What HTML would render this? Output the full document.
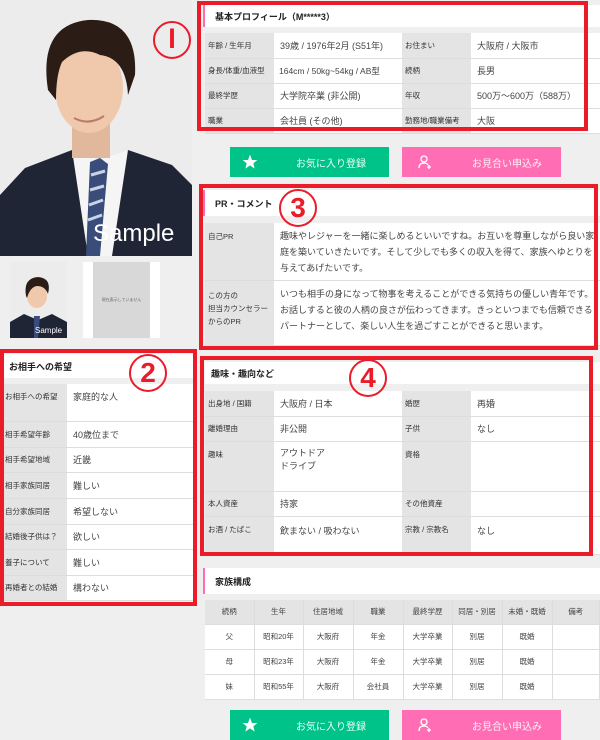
<!DOCTYPE html>
<html><head><meta charset="utf-8">
<style>
*{margin:0;padding:0;box-sizing:border-box}
body{width:600px;height:740px;background:#efefef;position:relative;overflow:hidden;font-family:"Liberation Sans","Noto Sans CJK JP",sans-serif;color:#333}
.abs{position:absolute}
.title{position:absolute;background:#fff;font-size:9px;font-weight:bold;color:#222;padding-left:10px;display:flex;align-items:center}
.title.acc{border-left:2px solid #ff6eb4}
table{position:absolute;border-collapse:collapse;table-layout:fixed}
td{border-bottom:1px solid #ddd;vertical-align:middle;font-size:9px;color:#444;padding:0 6px;background:#fff}
td.l{background:#e4e4e4;font-size:7.5px;color:#333;padding:0 3px}
.red{position:absolute;border:4px solid #ea1c2a}
.num{position:absolute;border:2px solid #ea1c2a;border-radius:50%;color:#ea1c2a;font-weight:bold;text-align:center}
.btn{position:absolute;height:30px;width:159px;color:#e8fff6;font-size:10px;display:flex;align-items:center}
.g{background:#00c389}.p{background:#ff6eb4;color:#fff0f8}
.fam td{text-align:center;font-size:7.5px;padding:0;border-right:1px solid #ddd}
.fam tr:first-child td{background:#e4e4e4}
</style></head><body>

<svg class="abs" style="left:0;top:0" width="192" height="256" viewBox="0 0 192 256">
<rect width="192" height="256" fill="#ececec"/>
<path d="M0 195 L25 168 L72 150 L100 165 L128 150 L172 165 L192 185 L192 256 L0 256Z" fill="#1f2535"/>
<path d="M72 150 L88 256 L112 256 L128 150 L100 160Z" fill="#f5f5f5"/>
<path d="M90 162 L100 158 L108 164 L100 256 L86 256Z" fill="#3a4c7a"/>
<path d="M91 175 L105 171 M90 190 L104 186 M89 205 L103 200 M88 220 L102 215" stroke="#c8d3e6" stroke-width="3"/>
<path d="M72 150 L100 168 L96 256 L70 256 L62 170Z" fill="#262c3d" opacity="0"/>
<rect x="72" y="118" width="38" height="40" fill="#e2b89c"/>
<ellipse cx="89" cy="88" rx="34" ry="45" fill="#f0c9ac"/>
<path d="M48 90 Q38 25 88 20 Q138 18 135 75 L128 95 Q126 58 100 55 Q80 45 62 62 Q56 75 56 100Z" fill="#2b1d16"/>
<path d="M74 118 Q89 126 104 116" stroke="#b87a6a" stroke-width="2" fill="none"/>
</svg>
<div class="abs" style="left:93px;top:220px;font-size:24px;color:#fff">Sample</div>
<div class="num" style="left:153px;top:21px;width:38px;height:38px;font-size:26px;line-height:32px">Ⅰ</div>

<svg class="abs" style="left:10px;top:262px" width="57" height="76" viewBox="0 0 57 76">
<rect width="57" height="76" fill="#ececec"/>
<path d="M0 60 L14 52 L28 58 L42 52 L57 60 L57 76 L0 76Z" fill="#1f2535"/>
<ellipse cx="27" cy="34" rx="10" ry="12" fill="#f0c9ac"/>
<path d="M16 34 Q13 16 28 15 Q42 16 38 32 Q35 24 27 24 Q20 25 17 36Z" fill="#2b1d16"/>
<path d="M24 54 L30 54 L28 76 L24 76Z" fill="#3a4c7a"/>
</svg>
<div class="abs" style="left:35px;top:326px;font-size:8px;color:#fff">Sample</div>
<div class="abs" style="left:83px;top:262px;width:77px;height:76px;background:#fff"></div>
<div class="abs" style="left:93px;top:262px;width:57px;height:76px;background:#d8d8d8;font-size:4px;color:#666;text-align:center;line-height:76px">現在表示していません</div>

<div class="title acc" style="left:203px;top:5px;width:397px;height:22px">基本プロフィール（M*****3）</div>
<table style="left:205px;top:33px;width:395px">
<colgroup><col style="width:69px"><col style="width:128px"><col style="width:69px"><col></colgroup>
<tr style="height:25px"><td class="l">年齢 / 生年月</td><td>39歳 / 1976年2月 (S51年)</td><td class="l">お住まい</td><td>大阪府 / 大阪市</td></tr>
<tr style="height:25px"><td class="l">身長/体重/血液型</td><td style="font-size:8.5px;padding:0 5px">164cm / 50kg~54kg / AB型</td><td class="l">続柄</td><td>長男</td></tr>
<tr style="height:25px"><td class="l">最終学歴</td><td>大学院卒業 (非公開)</td><td class="l">年収</td><td>500万～600万（588万）</td></tr>
<tr style="height:25px"><td class="l">職業</td><td>会社員 (その他)</td><td class="l">勤務地/職業備考</td><td>大阪</td></tr>
</table>
<div class="red" style="left:197px;top:1px;width:391px;height:130px"></div>

<div class="btn g" style="left:230px;top:147px"><svg style="margin-left:12px" width="16" height="16" viewBox="0 0 24 24"><path d="M12 1 L15 9 L23 9 L17 14 L19 22 L12 17 L5 22 L7 14 L1 9 L9 9Z" fill="#fff"/></svg><span style="margin-left:38px">お気に入り登録</span></div>
<div class="btn p" style="left:402px;top:147px"><svg style="margin-left:16px" width="14" height="14" viewBox="0 0 14 14" fill="none" stroke="#fff" stroke-width="1.3"><circle cx="6" cy="4" r="3"/><path d="M1 13 Q1 8 6 8 Q9 8 10 10"/><path d="M11 10 V14 M9 12 H13"/></svg><span style="margin-left:40px">お見合い申込み</span></div>

<div class="title acc" style="left:203px;top:190px;width:397px;height:26px">PR・コメント</div>
<table style="left:205px;top:223px;width:395px">
<colgroup><col style="width:69px"><col></colgroup>
<tr style="height:57px"><td class="l" style="vertical-align:top;padding-top:8px">自己PR</td><td style="line-height:16px;padding-top:5px;padding-right:2px;vertical-align:top">趣味やレジャーを一緒に楽しめるといいですね。お互いを尊重しながら良い家庭を築いていきたいです。そして少しでも多くの収入を得て、家族へゆとりを与えてあげたいです。</td></tr>
<tr style="height:65px"><td class="l" style="vertical-align:top;padding-top:8px;line-height:13px">この方の<br>担当カウンセラー<br>からのPR</td><td style="line-height:16px;padding-top:5px;padding-right:2px;vertical-align:top">いつも相手の身になって物事を考えることができる気持ちの優しい青年です。お話しすると彼の人柄の良さが伝わってきます。きっといつまでも信頼できるパートナーとして、楽しい人生を過ごすことができると思います。</td></tr>
</table>
<div class="red" style="left:199px;top:184px;width:399px;height:166px"></div>
<div class="num" style="left:279px;top:189px;width:38px;height:38px;font-size:28px;line-height:34px">3</div>

<div class="title" style="left:3px;top:354px;width:190px;height:24px;padding-left:6px">お相手への希望</div>
<table style="left:2px;top:384px;width:191px">
<colgroup><col style="width:65px"><col></colgroup>
<tr style="height:37px"><td class="l" style="vertical-align:top;padding-top:7px">お相手への希望</td><td style="vertical-align:top;padding-top:6px">家庭的な人</td></tr>
<tr style="height:26px"><td class="l">相手希望年齢</td><td>40歳位まで</td></tr>
<tr style="height:25px"><td class="l">相手希望地域</td><td>近畿</td></tr>
<tr style="height:26px"><td class="l">相手家族同居</td><td>難しい</td></tr>
<tr style="height:26px"><td class="l">自分家族同居</td><td>希望しない</td></tr>
<tr style="height:25px"><td class="l">結婚後子供は？</td><td>欲しい</td></tr>
<tr style="height:26px"><td class="l">養子について</td><td>難しい</td></tr>
<tr style="height:25px"><td class="l">再婚者との結婚</td><td>構わない</td></tr>
</table>
<div class="red" style="left:0;top:349px;width:197px;height:257px"></div>
<div class="num" style="left:129px;top:354px;width:38px;height:38px;font-size:28px;line-height:34px">2</div>

<div class="title" style="left:205px;top:362px;width:395px;height:22px;padding-left:6px">趣味・趣向など</div>
<table style="left:205px;top:391px;width:395px">
<colgroup><col style="width:69px"><col style="width:128px"><col style="width:69px"><col></colgroup>
<tr style="height:25px"><td class="l">出身地 / 国籍</td><td>大阪府 / 日本</td><td class="l">婚歴</td><td>再婚</td></tr>
<tr style="height:25px"><td class="l">離婚理由</td><td>非公開</td><td class="l">子供</td><td>なし</td></tr>
<tr style="height:50px"><td class="l" style="vertical-align:top;padding-top:7px">趣味</td><td style="vertical-align:top;padding-top:5px;line-height:13px">アウトドア<br>ドライブ</td><td class="l" style="vertical-align:top;padding-top:7px">資格</td><td></td></tr>
<tr style="height:25px"><td class="l">本人資産</td><td>持家</td><td class="l">その他資産</td><td></td></tr>
<tr style="height:38px"><td class="l" style="vertical-align:top;padding-top:7px">お酒 / たばこ</td><td style="vertical-align:top;padding-top:7px">飲まない / 吸わない</td><td class="l" style="vertical-align:top;padding-top:7px">宗教 / 宗教名</td><td style="vertical-align:top;padding-top:7px">なし</td></tr>
</table>
<div class="red" style="left:200px;top:356px;width:393px;height:200px"></div>
<div class="num" style="left:349px;top:359px;width:38px;height:38px;font-size:28px;line-height:34px">4</div>

<div class="title acc" style="left:203px;top:568px;width:397px;height:26px">家族構成</div>
<table class="fam" style="left:205px;top:600px;width:395px">
<colgroup><col style="width:49px"><col style="width:49px"><col style="width:50px"><col style="width:50px"><col style="width:49px"><col style="width:50px"><col style="width:50px"><col></colgroup>
<tr style="height:24px"><td>続柄</td><td>生年</td><td>住居地域</td><td>職業</td><td>最終学歴</td><td>同居・別居</td><td>未婚・既婚</td><td>備考</td></tr>
<tr style="height:25px"><td>父</td><td>昭和20年</td><td>大阪府</td><td>年金</td><td>大学卒業</td><td>別居</td><td>既婚</td><td></td></tr>
<tr style="height:25px"><td>母</td><td>昭和23年</td><td>大阪府</td><td>年金</td><td>大学卒業</td><td>別居</td><td>既婚</td><td></td></tr>
<tr style="height:25px"><td>妹</td><td>昭和55年</td><td>大阪府</td><td>会社員</td><td>大学卒業</td><td>別居</td><td>既婚</td><td></td></tr>
</table>

<div class="btn g" style="left:230px;top:710px"><svg style="margin-left:12px" width="16" height="16" viewBox="0 0 24 24"><path d="M12 1 L15 9 L23 9 L17 14 L19 22 L12 17 L5 22 L7 14 L1 9 L9 9Z" fill="#fff"/></svg><span style="margin-left:38px">お気に入り登録</span></div>
<div class="btn p" style="left:402px;top:710px"><svg style="margin-left:16px" width="14" height="14" viewBox="0 0 14 14" fill="none" stroke="#fff" stroke-width="1.3"><circle cx="6" cy="4" r="3"/><path d="M1 13 Q1 8 6 8 Q9 8 10 10"/><path d="M11 10 V14 M9 12 H13"/></svg><span style="margin-left:40px">お見合い申込み</span></div>
</body></html>
